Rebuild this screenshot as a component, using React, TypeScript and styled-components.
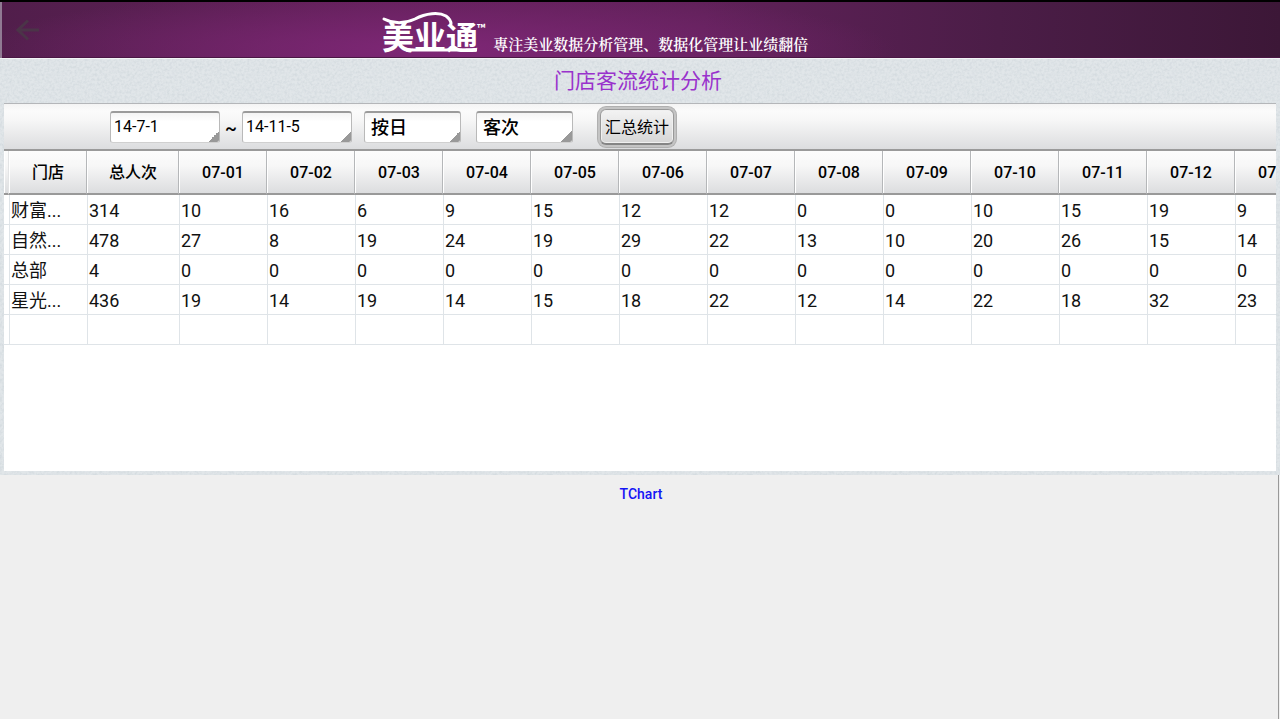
import React, { useState } from "react";
import styled, { createGlobalStyle } from "styled-components";

const GlobalStyle = createGlobalStyle`
  * { box-sizing: border-box; }
  html, body { margin: 0; padding: 0; }
  body {
    font-family: Roboto, "Noto Sans CJK SC", sans-serif;
    background: #efefef;
    color: #000;
  }
`;

const grain =
  "url(\"data:image/svg+xml,%3Csvg xmlns='http://www.w3.org/2000/svg' width='200' height='200'%3E%3Cfilter id='g'%3E%3CfeTurbulence type='fractalNoise' baseFrequency='0.4' numOctaves='2' stitchTiles='stitch'/%3E%3CfeColorMatrix values='0 0 0 0 0.45 0 0 0 0 0.52 0 0 0 0 0.57 0.6 0 0 0 -0.22'/%3E%3C/filter%3E%3Crect width='200' height='200' filter='url(%23g)'/%3E%3C/svg%3E\")";

const Page = styled.div`
  display: flex;
  flex-direction: column;
  min-height: 100vh;
`;

const Header = styled.header`
  display: grid;
  grid-template-columns: 81fr auto 100fr;
  height: 59px;
  border-top: 2px solid #000;
  border-bottom: 1px solid #f3f4f6;
  box-shadow: inset 2px 0 0 #907a93, inset 0 -1px 0 #4a1744;
  background:
    radial-gradient(ellipse 36% 110% at 34% 85%, #7e2776 0%, rgba(126, 39, 118, 0.5) 50%, rgba(126, 39, 118, 0) 100%),
    linear-gradient(90deg, #511e4b 0%, #622059 30%, #602159 55%, #4b1d47 78%, #3c1737 100%);
`;

const BackButton = styled.button`
  justify-self: start;
  align-self: center;
  margin-left: 12px;
  width: 32px;
  height: 32px;
  padding: 4px;
  border: 0;
  background: none;
  color: #4b3448;
  svg { display: block; }
`;

const Brand = styled.div`
  display: flex;
  align-items: flex-end;
  gap: 3px;
  color: #fff;
  svg { display: block; }
`;

const Logo = styled.svg`
  width: 108px;
  height: 48px;
  margin-bottom: 2px;
  overflow: visible;
  font-family: "Noto Sans CJK SC", sans-serif;
`;

const Tagline = styled.p`
  margin: 0 0 4px;
  font: 600 15px/20px "Noto Serif CJK SC", "Noto Sans CJK SC", serif;
  white-space: nowrap;
`;

const Backdrop = styled.main`
  padding: 0 4px 4px;
  background: ${grain} #e1e6e9;
`;

const Title = styled.h1`
  margin: 0;
  padding: 0 4px 4px 0;
  height: 44px;
  font: 400 21px/40px "Noto Sans CJK SC", sans-serif;
  color: #9932cc;
  text-align: center;
`;

const Toolbar = styled.form`
  display: flex;
  align-items: center;
  height: 48px;
  padding-left: 106px;
  border-top: 1px solid #b4b6b9;
  border-bottom: 2px solid #9a9a9a;
  background: linear-gradient(#f4f4f4 0, #fbfbfb 15%, #f7f7f7 35%, #dcdddf 100%);
`;

const corner =
  "linear-gradient(135deg, transparent 50%, #999 50%) right 0 bottom 0 / 11px 11px no-repeat padding-box, linear-gradient(#f4f4f4, #fff 30%)";

const field = `
  appearance: none;
  height: 32px;
  margin: 0;
  border: 1px solid #b9b9b9;
  border-top: 2px solid #9b9b9b;
  border-bottom-color: #d0d0d0;
  border-radius: 3px;
  background: ${corner};
  color: #000;
  outline: none;
`;

const DateInput = styled.input`
  ${field}
  width: 110px;
  padding: 0 3px 2px;
  font: 400 16px/26px Roboto, sans-serif;
`;

const Tilde = styled.span`
  width: 22px;
  padding-top: 4px;
  font: 500 18px/24px Roboto, sans-serif;
  text-align: center;
`;

const Picker = styled.select<{ $gap: number }>`
  ${field}
  width: 97px;
  margin-left: ${(p) => p.$gap}px;
  padding: 2px 6px 0;
  font: 500 18px/26px Roboto, "Noto Sans CJK SC", sans-serif;
`;

const SubmitButton = styled.button`
  height: 36px;
  margin-left: 27px;
  padding: 0 4px;
  border: 1px solid #999;
  border-bottom: 2px solid #858585;
  border-radius: 6px;
  background: linear-gradient(#f3f3f3, #d6d6d6);
  box-shadow: inset 0 0 0 1px #f0f0f0, 0 0 0 2px #c4c4c4, 0 0 0 3px #b0b0b0;
  font: 400 16px/32px "Noto Sans CJK SC", sans-serif;
  color: #000;
`;

const GridPanel = styled.section`
  height: 320px;
  overflow: hidden;
  background: #fff;
`;

const Grid = styled.table`
  width: 1319px;
  table-layout: fixed;
  border-collapse: separate;
  border-spacing: 0;
`;

const HeadCell = styled.th`
  height: 44px;
  padding: 2px 0 0 1px;
  border-right: 1px solid #b5b7b9;
  border-bottom: 2px solid #999;
  background: linear-gradient(#fcfcfc 0, #f7f7f7 35%, #dcdddf 100%);
  box-shadow: inset 1px 0 0 #fff;
  font: 500 16px/40px Roboto, "Noto Sans CJK SC", sans-serif;
  text-align: center;
  white-space: nowrap;

  &:first-child { border-right-color: #e3e4e5; }
`;

const Cell = styled.td`
  height: 30px;
  padding: 2px 0 0 1px;
  border-left: 1px solid #dfe4e8;
  border-bottom: 1px solid #dfe4e8;
  font: 400 18px/27px Roboto, "Noto Sans CJK SC", sans-serif;
  color: #111;
  white-space: nowrap;

  &:first-child { border-left: 0; }
`;

const ChartPanel = styled.section`
  flex: 1;
  padding-top: 9px;
  margin-right: 1px;
  border-right: 1px solid #999;
  background: #efefef;
`;

const ChartTitle = styled.h2`
  margin: 0;
  padding-left: 4px;
  font: 500 14px/20px Roboto, sans-serif;
  color: #1414f5;
  text-align: center;
`;

const days = ["07-01", "07-02", "07-03", "07-04", "07-05", "07-06", "07-07", "07-08", "07-09", "07-10", "07-11", "07-12", "07-13"];

const shops: { name: string; total: number; counts: number[] }[] = [
  { name: "财富...", total: 314, counts: [10, 16, 6, 9, 15, 12, 12, 0, 0, 10, 15, 19, 9] },
  { name: "自然...", total: 478, counts: [27, 8, 19, 24, 19, 29, 22, 13, 10, 20, 26, 15, 14] },
  { name: "总部", total: 4, counts: [0, 0, 0, 0, 0, 0, 0, 0, 0, 0, 0, 0, 0] },
  { name: "星光...", total: 436, counts: [19, 14, 19, 14, 15, 18, 22, 12, 14, 22, 18, 32, 23] },
];

export default function App() {
  const [from, setFrom] = useState("14-7-1");
  const [to, setTo] = useState("14-11-5");

  return (
    <Page>
      <GlobalStyle />
      <Header>
        <BackButton type="button" aria-label="返回">
          <svg width="24" height="24" viewBox="0 0 24 24" fill="none" stroke="currentColor" strokeWidth="3">
            <path d="M23 12H2M12 2.5 2 12l10 9.5" />
          </svg>
        </BackButton>
        <Brand>
          <Logo viewBox="0 0 108 48" role="img" aria-label="美业通">
            <text x="0" y="41" fontSize="32" fontWeight="700" fill="#fff">美业通</text>
            <path
              d="M2 11C12 16 22 16 33 11C44 5 57 4 64 8C68 11 69 13 69 16"
              fill="none"
              stroke="#fff"
              strokeWidth="3"
              strokeLinecap="round"
            />
            <path d="M24 42H95" stroke="#fff" strokeWidth="3" />
            <text x="95" y="25" fontSize="11" fontWeight="700" fill="#fff">™</text>
          </Logo>
          <Tagline>專注美业数据分析管理、数据化管理让业绩翻倍</Tagline>
        </Brand>
      </Header>

      <Backdrop>
        <Title>门店客流统计分析</Title>
        <Toolbar onSubmit={(e) => e.preventDefault()}>
          <DateInput aria-label="开始日期" value={from} onChange={(e) => setFrom(e.target.value)} />
          <Tilde>~</Tilde>
          <DateInput aria-label="结束日期" value={to} onChange={(e) => setTo(e.target.value)} />
          <Picker $gap={12} aria-label="统计周期" defaultValue="按日">
            <option>按日</option>
          </Picker>
          <Picker $gap={15} aria-label="统计类型" defaultValue="客次">
            <option>客次</option>
          </Picker>
          <SubmitButton type="submit">汇总统计</SubmitButton>
        </Toolbar>
        <GridPanel>
          <Grid>
            <colgroup>
              <col style={{ width: 5 }} />
              <col style={{ width: 78 }} />
              <col style={{ width: 92 }} />
              {days.map((d) => (
                <col key={d} style={{ width: 88 }} />
              ))}
            </colgroup>
            <thead>
              <tr>
                <HeadCell />
                <HeadCell>门店</HeadCell>
                <HeadCell>总人次</HeadCell>
                {days.map((d) => (
                  <HeadCell key={d}>{d}</HeadCell>
                ))}
              </tr>
            </thead>
            <tbody>
              {shops.map((s) => (
                <tr key={s.name}>
                  <Cell />
                  <Cell>{s.name}</Cell>
                  <Cell>{s.total}</Cell>
                  {s.counts.map((c, i) => (
                    <Cell key={days[i]}>{c}</Cell>
                  ))}
                </tr>
              ))}
              <tr>
                {Array.from({ length: days.length + 3 }, (_, i) => (
                  <Cell key={i} />
                ))}
              </tr>
            </tbody>
          </Grid>
        </GridPanel>
      </Backdrop>

      <ChartPanel>
        <ChartTitle>TChart</ChartTitle>
      </ChartPanel>
    </Page>
  );
}
